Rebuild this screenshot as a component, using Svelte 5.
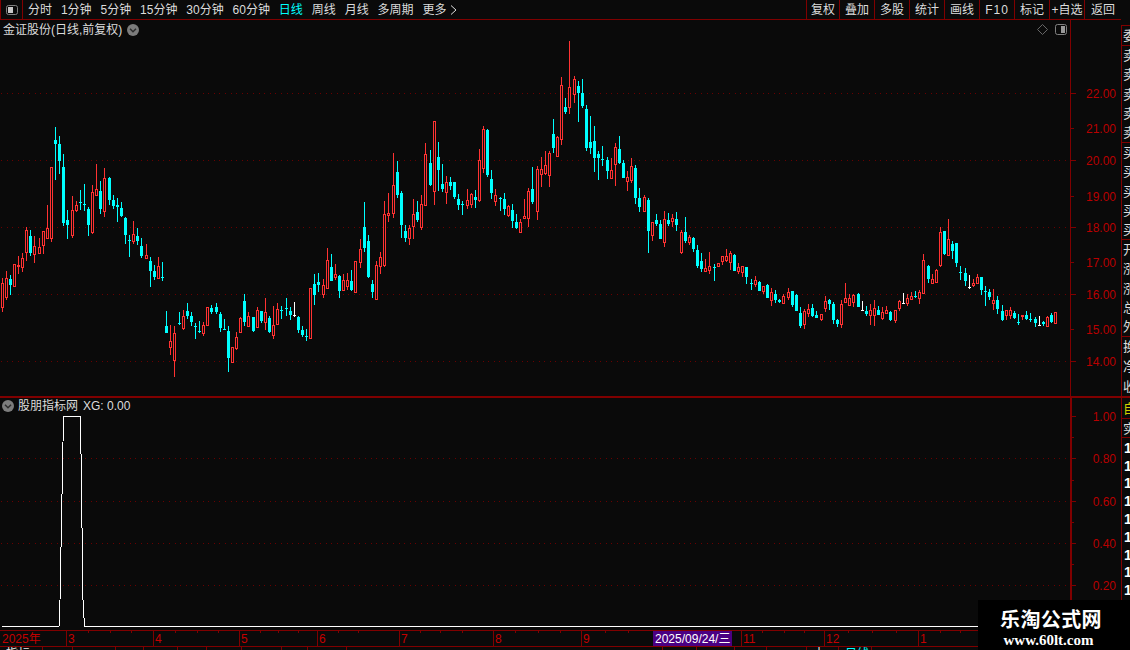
<script>
  const leftTabs = [
    { t: '分时' }, { t: '1分钟' }, { t: '5分钟' }, { t: '15分钟' }, { t: '30分钟' }, { t: '60分钟' },
    { t: '日线', on: true }, { t: '周线' }, { t: '月线' }, { t: '多周期' }
  ];
  const rightBtns = ['复权', '叠加', '多股', '统计', '画线', 'F10', '标记', '+自选', '返回'];

  const seg = (ox, oy, rows) =>
    rows.map(([x, h, t, b, l, k]) => ({
      x: Math.floor(ox + x / 3),
      h: Math.round(oy + h / 3),
      t: Math.round(oy + t / 3),
      b: Math.round(oy + b / 3),
      l: Math.round(oy + l / 3),
      k
    }));

  const candles = [
    ...seg(0, 120, [
      [7,475,490,560,575,'r'],[19,453,475,530,540,'r'],[31,465,477,495,525,'c'],[43,433,433,497,497,'r'],[55,408,435,435,462,'r'],
      [67,400,415,440,456,'r'],[79,322,331,395,422,'r'],[91,330,348,400,407,'c'],[103,348,378,402,428,'r'],[118,354,382,398,398,'r'],
      [130,334,334,374,402,'r'],[142,255,325,353,353,'r'],[154,142,142,353,365,'r'],[166,21,60,72,180,'c'],[178,48,72,122,162,'c'],
      [190,102,142,308,318,'c'],[202,270,300,315,357,'c'],[217,228,270,345,354,'r'],[229,243,255,270,276,'r'],[241,210,247,247,270,'c'],
      [253,192,253,253,273,'c'],[265,262,267,315,348,'c'],[277,195,217,335,342,'r'],[289,132,208,224,228,'r'],[301,183,213,267,282,'c'],
      [313,144,175,272,291,'r'],[328,171,174,240,255,'c'],[340,225,240,258,267,'c'],[352,234,255,261,306,'c'],[364,246,264,288,291,'c'],
      [376,291,294,345,372,'c'],[388,345,361,361,411,'c'],[400,303,343,362,372,'r'],[412,324,348,363,375,'c'],[424,354,378,408,414,'c'],
      [439,372,405,413,413,'r'],[451,411,423,453,501,'c'],[463,435,453,471,480,'c'],[475,411,438,474,477,'r'],[487,426,472,472,483,'c']
    ]),
    ...seg(160, 280, [
      [19,93,138,159,159,'c'],[31,135,183,200,225,'r'],[43,138,159,240,291,'r'],[58,96,130,130,135,'c'],[70,90,108,144,150,'r'],
      [82,69,93,108,117,'c'],[94,96,108,126,138,'c'],[106,129,139,139,177,'c'],[118,123,154,154,159,'c'],[130,126,135,159,168,'r'],
      [142,81,81,135,135,'r'],[154,75,84,96,102,'c'],[169,69,81,96,102,'c'],[181,96,102,144,156,'c'],[193,117,146,146,150,'c'],
      [205,138,153,234,276,'c'],[217,201,201,246,249,'r'],[229,156,171,204,210,'r'],[241,111,114,156,156,'r'],[253,42,63,126,138,'c'],
      [265,96,108,138,138,'r'],[280,111,111,153,156,'c'],[292,81,90,141,144,'r'],[304,93,93,123,129,'c'],[316,54,96,126,150,'r'],
      [328,108,114,156,159,'c'],[340,78,135,165,177,'r'],[352,69,87,132,132,'r'],[364,78,90,90,117,'c'],[379,54,84,84,108,'c'],
      [391,81,93,105,120,'c'],[403,66,106,106,111,'w'],[415,108,111,150,159,'c'],[427,138,150,165,171,'c'],[439,147,168,168,183,'c'],
      [451,24,24,174,174,'r']
    ]),
    ...seg(300, 110, [
      [43,492,522,555,585,'c'],[55,489,516,525,546,'c'],[70,507,526,552,564,'r'],[82,414,450,533,533,'r'],[94,432,471,513,513,'c'],
      [106,462,492,500,510,'r'],[118,495,498,543,564,'c'],[130,492,510,540,543,'r'],[142,489,510,528,540,'r'],[154,480,513,540,543,'c'],
      [166,453,453,546,546,'r'],[181,387,417,456,474,'r'],[193,276,351,414,426,'c'],[205,375,393,501,504,'c'],[217,510,522,546,564,'c'],
      [229,453,465,567,567,'r'],[241,426,441,468,492,'r'],[253,273,312,465,471,'r'],[265,249,309,315,336,'r'],[280,129,225,309,324,'r'],
      [292,153,186,255,264,'c'],[304,244,249,345,384,'c'],[316,345,363,384,396,'c'],[328,345,354,384,405,'r'],[340,267,312,348,387,'r'],
      [352,273,306,330,336,'c'],[364,255,282,351,360,'r'],[376,99,132,285,285,'r'],[391,120,159,225,228,'c'],[403,33,33,243,285,'r'],
      [415,96,141,180,243,'c'],[427,162,222,237,246,'c'],[439,198,216,246,282,'r'],[451,201,216,228,240,'c'],[463,216,216,261,267,'c'],
      [475,252,267,285,300,'c'],[487,273,283,283,315,'c'],[502,237,270,285,297,'r'],[514,249,252,282,294,'r'],[526,240,261,270,294,'c'],
      [538,117,150,270,276,'r'],[550,48,57,174,189,'r'],[562,57,60,195,201,'c'],[574,180,207,249,267,'c'],[586,237,255,273,288,'r'],
      [601,261,265,265,303,'c'],[613,249,267,297,315,'c'],[625,285,288,315,321,'r'],[637,282,300,333,354,'c'],[649,312,336,354,357,'c'],
      [661,327,336,366,366,'r'],[673,267,319,323,323,'r'],[685,234,243,324,351,'r'],[697,171,237,276,282,'c'],[712,168,177,303,330,'r'],
      [724,141,177,192,231,'r'],[736,123,165,189,195,'r'],[748,123,130,195,231,'r']
    ]),
    ...seg(530, 35, [
      [70,252,297,339,354,'c'],[82,304,307,363,366,'r'],[94,126,151,311,330,'r'],[106,189,216,231,237,'c'],[118,18,157,217,237,'r'],
      [133,123,133,176,204,'r'],[145,138,153,174,261,'c'],[157,132,174,213,219,'c'],[169,210,222,339,348,'c'],[181,243,321,339,357,'c'],
      [193,273,318,369,411,'c'],[205,348,357,369,435,'c'],[217,333,372,372,393,'c'],[232,366,375,408,432,'c'],[244,369,405,429,429,'r'],
      [256,324,337,388,453,'r'],[268,303,342,384,387,'c'],[280,375,384,429,429,'c'],[292,408,427,437,468,'r'],[304,369,393,435,444,'r'],
      [316,390,399,489,507,'c'],[328,459,489,516,531,'c'],[343,480,487,528,531,'r'],[355,489,495,588,654,'c'],[367,561,561,600,618,'r'],
      [379,537,555,567,573,'c'],[391,555,567,612,612,'c'],[403,528,553,621,636,'r'],[415,534,555,567,573,'c'],[427,537,549,557,576,'r'],
      [439,531,552,570,588,'c'],[454,585,591,651,657,'r'],[466,546,591,618,624,'c'],[478,600,606,621,630,'r'],[490,606,609,642,651,'c'],
      [502,630,645,693,699,'c'],[514,654,678,702,711,'c'],[526,672,699,708,711,'r'],[538,651,693,705,717,'r'],[553,687,695,695,738,'c'],
      [565,684,684,693,696,'r'],[577,663,663,678,690,'r'],[589,642,663,675,681,'r'],[601,648,654,681,705,'r'],[613,657,660,708,708,'c'],
      [625,684,696,708,717,'r'],[637,693,693,711,726,'r'],[649,696,696,726,747,'c'],[664,732,745,745,765,'c'],[676,723,735,747,756,'r'],
      [688,738,741,768,768,'c'],[700,753,753,768,777,'r'],[712,747,750,790,790,'c']
    ]),
    ...seg(780, 210, [
      [-27,234,246,270,288,'r'],[-15,240,252,270,279,'c'],[-1,268,270,275,278,'c'],
      [10,252,259,278,278,'r'],[25,234,246,261,270,'r'],[37,243,243,285,291,'c'],[49,252,255,303,303,'c'],[61,291,309,348,354,'c'],
      [73,297,303,342,357,'r'],[85,282,297,309,321,'r'],[97,282,294,318,321,'c'],[109,303,315,324,324,'c'],[124,312,313,327,333,'r'],
      [136,258,273,294,306,'r'],[148,267,270,282,300,'c'],[160,276,282,330,342,'c'],[172,327,330,342,351,'c'],[184,270,282,342,354,'r'],
      [196,219,264,276,276,'r'],[208,252,264,285,285,'r'],[220,252,255,276,291,'r'],[235,249,252,291,291,'c'],[247,273,299,299,303,'w'],
      [259,288,303,312,318,'c'],[271,282,300,315,345,'r'],[283,270,294,315,348,'r'],[295,288,300,315,315,'c'],[307,291,306,324,330,'r'],
      [319,288,300,309,309,'r'],[331,303,306,330,333,'c'],[346,300,301,330,339,'r'],[358,270,273,294,303,'r'],[370,249,278,278,282,'w'],
      [382,252,264,279,288,'r'],[394,246,258,267,267,'r'],[406,243,259,259,264,'c'],[418,240,246,264,282,'r'],[430,132,150,249,249,'r'],
      [445,165,168,207,219,'c'],[457,192,207,219,219,'r'],[469,177,180,216,216,'r'],[481,51,66,165,171,'r'],[493,63,63,132,135,'c'],
      [505,27,87,135,135,'r'],[517,93,102,123,147,'c'],[529,99,99,159,171,'c'],[541,168,187,187,210,'c'],[556,174,189,213,228,'c'],
      [568,195,230,230,237,'w'],[580,207,219,225,231,'r'],[592,192,201,219,222,'r'],[604,201,201,240,255,'c'],[616,228,243,243,288,'c'],
      [628,237,246,261,270,'c'],[640,237,270,279,300,'r'],[652,258,270,297,312,'c'],[667,285,303,330,333,'c'],[679,300,300,315,330,'r'],
      [691,291,300,315,327,'r'],[703,303,309,324,327,'c'],[715,312,336,336,345,'c'],[727,315,315,319,330,'r'],[739,303,315,327,330,'c'],
      [751,309,328,328,336,'c'],[766,321,327,339,351,'c'],[778,318,346,346,348,'w'],[790,333,336,342,348,'c'],[802,318,322,348,348,'r'],
      [814,309,315,336,339,'c'],[826,306,307,339,339,'r']
    ])
  ];

  const upperLabels = [
    { v: '22.00', y: 93, major: true }, { v: '21.00', y: 128 }, { v: '20.00', y: 160, major: true },
    { v: '19.00', y: 196 }, { v: '18.00', y: 227, major: true }, { v: '17.00', y: 262 },
    { v: '16.00', y: 294, major: true }, { v: '15.00', y: 329 }, { v: '14.00', y: 361, major: true }
  ];
  const lowerLabels = [
    { v: '1.00', y: 416 }, { v: '0.80', y: 458 }, { v: '0.60', y: 501 }, { v: '0.40', y: 543 }, { v: '0.20', y: 585 }
  ];
  const lowerMinor = [437, 480, 522, 564, 606];

  const months = [
    { x: 66, t: '3' }, { x: 153, t: '4' }, { x: 239, t: '5' }, { x: 317, t: '6' }, { x: 399, t: '7' },
    { x: 493, t: '8' }, { x: 581, t: '9' }, { x: 741, t: '11' }, { x: 824, t: '12' }, { x: 918, t: '1' }
  ];
  const dateTicks = [88,110,131,175,197,218,260,278,298,338,358,420,440,462,515,538,560,605,628,762,784,804,848,872,896,940,960];

  const bottomTabs = [
    { w: 43, t: '指标' }, { w: 30, t: '+' }, { w: 43 }, { w: 28 }, { w: 34 }, { w: 29 }, { w: 35 }, { w: 40 }, { w: 26 }, { w: 39 },
    { w: 316 }, { w: 34 }, { w: 38 }, { w: 32 }, { w: 40 }, { w: 32, t: '十' }, { w: 33, t: '日线', on: true }, { w: 249 }
  ];

  const sideGroups = [
    { rows: ['委'], cls: 'one' },
    { rows: ['卖', '卖', '卖', '卖', '卖'] },
    { rows: ['买', '买', '买', '买', '买'] },
    { rows: ['开', '涨', '涨', '总', '外'] },
    { rows: ['换', '净', '收'], cls: 'tall' }
  ];
  const ones = Array.from({ length: 9 });
</script>

<div class="app">
  <div class="left">
    <div class="toolbar">
      <div class="icon-cell">
        <svg width="12" height="10" viewBox="0 0 12 10">
          <rect x="0.5" y="0.5" width="11" height="9" rx="2" fill="none" stroke="#808080" />
          <rect x="2" y="2" width="5" height="6" fill="#c8c8c8" />
        </svg>
      </div>
      <nav class="tabs">
        {#each leftTabs as tab}
          <span class:on={tab.on}>{tab.t}</span>
        {/each}
        <span class="more">更多
          <svg width="7" height="10" viewBox="0 0 7 10"><path d="M1 0.5 L6 5 L1 9.5" fill="none" stroke="#dcdcdc" /></svg>
        </span>
      </nav>
      <div class="btns">
        {#each rightBtns as b}
          <button class:f10={b === 'F10'}>{b}</button>
        {/each}
      </div>
    </div>

    <section class="pane upper">
      <div class="pane-title">
        <span>金证股份(日线,前复权)</span>
        <svg class="drop" width="12" height="12" viewBox="0 0 12 12">
          <circle cx="6" cy="6" r="6" fill="#7c7c7c" />
          <path d="M3 4.8 L6 7.8 L9 4.8" fill="none" stroke="#2c2c2c" stroke-width="1.5" />
        </svg>
      </div>
      <div class="pane-tools">
        <svg width="11" height="11" viewBox="0 0 11 11"><path d="M5.5 0.5 L10.5 5.5 L5.5 10.5 L0.5 5.5 Z" fill="none" stroke="#666" /></svg>
        <svg width="12" height="11" viewBox="0 0 12 11">
          <rect x="0.5" y="0.5" width="11" height="10" rx="2" fill="none" stroke="#808080" />
          <rect x="6" y="2" width="4" height="7" fill="#999" />
        </svg>
      </div>
      <svg class="plot" width="1070" height="376" viewBox="0 20 1070 376" shape-rendering="crispEdges">
        {#each upperLabels.filter((l) => l.major) as l}
          <line class="dots" x1="1" x2="1070" y1={l.y + 0.5} y2={l.y + 0.5} />
        {/each}
        {#each candles as c}
          <g class={c.k}>
            {#if c.k === 'r'}
              <rect class="fill" x={c.x} y={c.h} width="1" height={Math.max(0, c.t - c.h)} />
              <rect class="fill" x={c.x} y={c.b} width="1" height={Math.max(0, c.l - c.b)} />
              {#if c.b - c.t < 2}
                <rect class="fill" x={c.x - 1} y={c.t} width="3" height="2" />
              {:else}
                <rect class="hollow" x={c.x - 0.5} y={c.t + 0.5} width="2" height={c.b - c.t} />
              {/if}
            {:else}
              <rect class="fill" x={c.x} y={c.h} width="1" height={c.l - c.h} />
              <rect class="fill" x={c.x - 1} y={c.t} width="3" height={Math.max(1, c.b - c.t)} />
            {/if}
          </g>
        {/each}
      </svg>
      <svg class="axis" width="50" height="376" viewBox="1071 20 50 376" shape-rendering="crispEdges">
        {#each upperLabels as l}
          <rect class="tick" x="1071" y={l.y} width={l.major ? 5 : 3} height="1" />
        {/each}
        <g shape-rendering="auto">
          {#each upperLabels as l}
            <text x="1116" y={l.y + 5} text-anchor="end">{l.v}</text>
          {/each}
        </g>
      </svg>
    </section>

    <section class="pane lower">
      <div class="pane-title sub">
        <svg class="drop" width="12" height="12" viewBox="0 0 12 12">
          <circle cx="6" cy="6" r="6" fill="#7c7c7c" />
          <path d="M3 4.8 L6 7.8 L9 4.8" fill="none" stroke="#2c2c2c" stroke-width="1.5" />
        </svg>
        <span>股朋指标网</span>
        <span class="xg">XG: 0.00</span>
      </div>
      <svg class="plot" width="1070" height="232" viewBox="0 398 1070 232" shape-rendering="crispEdges">
        {#each lowerLabels.slice(1) as l}
          <line class="dots" x1="1" x2="1070" y1={l.y + 0.5} y2={l.y + 0.5} />
        {/each}
        <polyline class="xgline" points="2,626.5 59,626.5 60,600 63.5,416.5 80.5,416.5 83,600 84.5,626.5 1070,626.5" />
      </svg>
      <svg class="axis thick" width="49" height="232" viewBox="1072 398 49 232" shape-rendering="crispEdges">
        {#each lowerLabels as l}
          <rect class="tick" x="1072" y={l.y} width="4" height="1" />
        {/each}
        {#each lowerMinor as y}
          <rect class="tick" x="1072" {y} width="2" height="1" />
        {/each}
        <g shape-rendering="auto">
          {#each lowerLabels as l}
            <text x="1116" y={l.y + 5} text-anchor="end">{l.v}</text>
          {/each}
        </g>
      </svg>
    </section>

    <svg class="dates" width="1121" height="15" viewBox="0 631 1121 15" shape-rendering="crispEdges">
      {#each dateTicks as x}
        <rect class="tick" {x} y="631" width="1" height="2" />
      {/each}
      {#each months as m}
        <rect class="tick" x={m.x} y="631" width="1" height="15" />
      {/each}
      <rect class="stamp" x="653" y="631" width="79" height="15" />
      <g shape-rendering="auto">
        <text x="2" y="643">2025年</text>
        {#each months as m}
          <text x={m.x + 2} y="643">{m.t}</text>
        {/each}
        <text class="stamp-text" x="655" y="643">2025/09/24/三</text>
      </g>
    </svg>

    <div class="bottom-tabs">
      {#each bottomTabs as b}
        <span class:on={b.on} style="width:{b.w}px">{b.t ?? ''}</span>
      {/each}
    </div>
  </div>

  <aside class="side">
    {#each sideGroups as g}
      <div class="group {g.cls ?? ''}">
        {#each g.rows as r}
          <div class="cell">{r}</div>
        {/each}
      </div>
    {/each}
    <div class="group self"><div class="cell">自</div></div>
    <div class="group one2"><div class="cell">实</div></div>
    <div class="ones">
      {#each ones as _}
        <div class="cell">1</div>
      {/each}
    </div>
  </aside>

  <div class="mark">
    <strong>乐淘公式网</strong>
    <em>www.60lt.com</em>
  </div>
</div>

<style>
  :global(body) {
    margin: 0;
    background: #0a0a0a;
  }
  .app {
    position: relative;
    width: 1130px;
    height: 650px;
    overflow: hidden;
    display: flex;
    background: #0a0a0a;
    color: #dcdcdc;
    font: 12px/1 "Liberation Sans", "Noto Sans CJK SC", sans-serif;
  }
  .left {
    width: 1121px;
    flex: none;
    display: flex;
    flex-direction: column;
  }
  .toolbar {
    height: 19px;
    width: 1121px;
    flex: none;
    display: flex;
    align-items: stretch;
    border-bottom: 1px solid #800000;
  }
  .icon-cell {
    width: 23px;
    box-sizing: border-box;
    border-left: 1px solid #800000;
    border-right: 1px solid #800000;
    display: flex;
    align-items: center;
    justify-content: center;
  }
  .tabs {
    display: flex;
    align-items: center;
    gap: 8.9px;
    padding-left: 5px;
    white-space: nowrap;
  }
  .tabs .on {
    color: #00ffff;
  }
  .more {
    display: flex;
    align-items: center;
    gap: 4px;
  }
  .btns {
    margin-left: auto;
    display: flex;
  }
  .btns button {
    width: 35px;
    box-sizing: border-box;
    padding: 0;
    border: 0;
    border-left: 1px solid #800000;
    background: none;
    color: #dcdcdc;
    font: inherit;
  }
  .btns button:first-child {
    width: 33px;
  }
  .btns button:last-child {
    width: 37px;
  }
  .btns .f10 {
    letter-spacing: 1px;
  }
  .pane {
    position: relative;
    display: flex;
    flex: none;
  }
  .upper {
    height: 376px;
    border-bottom: 2px solid #800000;
  }
  .lower {
    height: 232px;
  }
  .plot {
    display: block;
    flex: none;
  }
  .axis {
    display: block;
    flex: none;
    border-left: 1px solid #800000;
  }
  .axis.thick {
    border-left-width: 2px;
  }
  .axis text {
    fill: #b80000;
    font-size: 12px;
  }
  .tick {
    fill: #800000;
  }
  .dots {
    stroke: #6a0000;
    stroke-width: 1;
    stroke-dasharray: 1 4.6;
  }
  .pane-title {
    position: absolute;
    left: 3px;
    top: 3px;
    height: 13px;
    display: flex;
    align-items: center;
    gap: 5px;
    white-space: nowrap;
  }
  .pane-title.sub {
    left: 2px;
    top: 1px;
    gap: 4px;
  }
  .xg {
    margin-left: 1px;
  }
  .drop {
    display: block;
    flex: none;
  }
  .pane-tools {
    position: absolute;
    left: 1037px;
    top: 4px;
    display: flex;
    align-items: center;
    gap: 7px;
  }
  .pane-tools svg {
    display: block;
  }
  .fill {
    stroke: none;
  }
  .hollow {
    fill: #0a0a0a;
    stroke-width: 1;
  }
  .r .fill {
    fill: #ff3232;
  }
  .r .hollow {
    stroke: #ff3232;
  }
  .c .fill {
    fill: #00ffff;
  }
  .w .fill {
    fill: #ffffff;
  }
  .xgline {
    fill: none;
    stroke: #ffffff;
    stroke-width: 1;
  }
  .dates {
    display: block;
    flex: none;
    border-top: 1px solid #800000;
    border-bottom: 1px solid #800000;
  }
  .dates text {
    fill: #c40000;
    font-size: 12px;
  }
  .stamp {
    fill: #4b0082;
  }
  .dates .stamp-text {
    fill: #ffffff;
  }
  .bottom-tabs {
    display: flex;
    height: 14px;
    flex: none;
  }
  .bottom-tabs span {
    box-sizing: border-box;
    flex: none;
    border-right: 1px solid #800000;
    padding: 0 0 0 6px;
    line-height: 15px;
    color: #e8e8e8;
    white-space: nowrap;
  }
  .bottom-tabs .on {
    color: #00ffff;
  }
  .side {
    flex: none;
    width: 9px;
    box-sizing: border-box;
    margin-top: 25px;
    overflow: hidden;
    font-size: 13px;
    border-left: 1px solid #800000;
    border-top: 1px solid #800000;
    padding-left: 0;
  }
  .group {
    border-bottom: 1px solid #800000;
    box-sizing: border-box;
    height: 97px;
    display: flex;
    flex-direction: column;
  }
  .group.one {
    height: 20px;
  }
  .group.tall {
    height: 61px;
    border-bottom: 2px solid #800000;
  }
  .group.self {
    height: 21px;
    color: #d0d000;
  }
  .group.one2 {
    height: 19px;
  }
  .cell {
    flex: 1;
    width: 30px;
    display: flex;
    align-items: center;
    padding-left: 1px;
  }
  .ones {
    padding-top: 1px;
  }
  .ones .cell {
    height: 17.8px;
    font-weight: 700;
    font-size: 14px;
    color: #ffffff;
    padding-left: 2px;
  }
  .mark {
    position: absolute;
    left: 978px;
    top: 600px;
    width: 152px;
    height: 50px;
    background: #000;
    display: flex;
    flex-direction: column;
    align-items: center;
    padding-top: 8px;
    box-sizing: border-box;
    color: #fff;
  }
  .mark strong {
    font: 700 20px/22px "Noto Sans CJK SC", sans-serif;
    letter-spacing: 0.4px;
    margin-left: -6px;
  }
  .mark em {
    font: 700 15px/16px "Liberation Serif", serif;
    margin-top: 2px;
    margin-left: -11px;
  }
</style>
